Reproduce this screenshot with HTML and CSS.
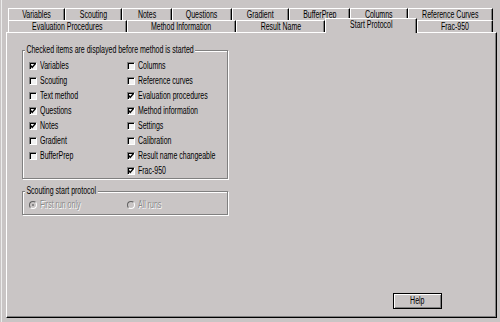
FILE: index.html
```html
<!DOCTYPE html>
<html>
<head>
<meta charset="utf-8">
<link rel="stylesheet" href="styles.css">
</head>
<body>
<div class="win">
  <div class="tabs">
    <div class="tabrow row1">
      <div class="tab"><span class="t">Variables</span></div>
      <div class="tab"><span class="t">Scouting</span></div>
      <div class="tab"><span class="t">Notes</span></div>
      <div class="tab"><span class="t">Questions</span></div>
      <div class="tab"><span class="t">Gradient</span></div>
      <div class="tab"><span class="t">BufferPrep</span></div>
      <div class="tab"><span class="t">Columns</span></div>
      <div class="tab"><span class="t">Reference Curves</span></div>
    </div>
    <div class="tabrow row2">
      <div class="tab"><span class="t">Evaluation Procedures</span></div>
      <div class="tab"><span class="t">Method Information</span></div>
      <div class="tab"><span class="t">Result Name</span></div>
      <div class="tab sel"><span class="t">Start Protocol</span></div>
      <div class="tab"><span class="t">Frac-950</span></div>
    </div>
  </div>
  <div class="panel">
    <div class="group g1">
      <span class="legend t">Checked items are displayed before method is started</span>
      <div class="cols">
        <div class="col">
          <div class="item"><span class="cb"><svg viewBox="0 0 6 6"><polyline points="0.6,2.4 2.2,4.4 5.6,0.4"/></svg></span><span class="t">Variables</span></div>
          <div class="item"><span class="cb"></span><span class="t">Scouting</span></div>
          <div class="item"><span class="cb"></span><span class="t">Text method</span></div>
          <div class="item"><span class="cb"><svg viewBox="0 0 6 6"><polyline points="0.6,2.4 2.2,4.4 5.6,0.4"/></svg></span><span class="t">Questions</span></div>
          <div class="item"><span class="cb"><svg viewBox="0 0 6 6"><polyline points="0.6,2.4 2.2,4.4 5.6,0.4"/></svg></span><span class="t">Notes</span></div>
          <div class="item"><span class="cb"></span><span class="t">Gradient</span></div>
          <div class="item"><span class="cb"></span><span class="t">BufferPrep</span></div>
        </div>
        <div class="col">
          <div class="item"><span class="cb"></span><span class="t">Columns</span></div>
          <div class="item"><span class="cb"></span><span class="t">Reference curves</span></div>
          <div class="item"><span class="cb"><svg viewBox="0 0 6 6"><polyline points="0.6,2.4 2.2,4.4 5.6,0.4"/></svg></span><span class="t">Evaluation procedures</span></div>
          <div class="item"><span class="cb"><svg viewBox="0 0 6 6"><polyline points="0.6,2.4 2.2,4.4 5.6,0.4"/></svg></span><span class="t">Method information</span></div>
          <div class="item"><span class="cb"></span><span class="t">Settings</span></div>
          <div class="item"><span class="cb"></span><span class="t">Calibration</span></div>
          <div class="item"><span class="cb"><svg viewBox="0 0 6 6"><polyline points="0.6,2.4 2.2,4.4 5.6,0.4"/></svg></span><span class="t">Result name changeable</span></div>
          <div class="item"><span class="cb"><svg viewBox="0 0 6 6"><polyline points="0.6,2.4 2.2,4.4 5.6,0.4"/></svg></span><span class="t">Frac-950</span></div>
        </div>
      </div>
    </div>
    <div class="group g2">
      <span class="legend t">Scouting start protocol</span>
      <div class="cols">
        <div class="col">
          <div class="item dis"><span class="rb on"></span><span class="t">First run only</span></div>
        </div>
        <div class="col">
          <div class="item dis"><span class="rb"></span><span class="t">All runs</span></div>
        </div>
      </div>
    </div>
    <div class="foot">
      <button class="btn"><span class="t">Help</span></button>
    </div>
  </div>
</div>
</body>
</html>
```
FILE: styles.css
```css
html, body {
  margin: 0;
  padding: 0;
}
body {
  width: 500px;
  height: 322px;
  overflow: hidden;
  background: #c9c5c5;
  font-family: "Liberation Sans", Arial, sans-serif;
  font-size: 10px;
  color: #000;
}
.win {
  height: 322px;
  box-sizing: border-box;
  margin-left: 1px;
  border-left: 1px solid #ececec;
  padding: 8px 3px 4px 4px;
}
.t {
  display: inline-block;
  white-space: nowrap;
  line-height: 10px;
  transform: scaleX(0.7);
  transform-origin: 0 50%;
}
.tabs {
  margin: 0 4px 0 2px;
}
.tabrow {
  display: grid;
  height: 12px;
}
.row1 {
  grid-template-columns: 57px 57px 50px 60px 57px 61px 58px 1fr;
}
.row2 {
  grid-template-columns: 119px 109px 89px 92px 1fr;
}
.tab {
  display: flex;
  align-items: center;
  justify-content: center;
  box-sizing: border-box;
  border-top: 1px solid #fff;
  border-left: 1px solid #fff;
  border-right: 1px solid #000;
  box-shadow: inset -1px 0 #808080;
  background: #c9c5c5;
}
.tab .t {
  transform-origin: 50% 50%;
}
.tab.sel {
  margin-top: -2px;
  margin-bottom: -1px;
  padding-bottom: 3px;
  position: relative;
  z-index: 2;
}
.panel {
  height: 286px;
  box-sizing: border-box;
  border: 1px solid;
  border-color: #fff #000 #000 #fff;
  box-shadow: inset -1px -1px #808080;
  display: flex;
  flex-direction: column;
  padding: 17px 0 8px 15px;
}
.group {
  position: relative;
  width: 206px;
  box-sizing: border-box;
  border: 1px solid #808080;
  box-shadow: inset 1px 1px #fff, 1px 1px #fff;
}
.g1 {
  height: 129px;
  padding: 7px 0 0 6px;
}
.g2 {
  margin-top: 12px;
  height: 24px;
  padding: 5px 0 0 6px;
}
.legend {
  position: absolute;
  top: -7px;
  left: 2px;
  padding: 0 2px;
  line-height: 12px;
  background: #c9c5c5;
}
.cols {
  display: flex;
}
.col {
  width: 98px;
}
.item {
  height: 15px;
  display: flex;
  align-items: center;
  gap: 3px;
}
.cb {
  width: 8px;
  height: 8px;
  box-sizing: border-box;
  border: 1px solid;
  border-color: #808080 #fff #fff #808080;
  box-shadow: inset 1px 1px #000;
  background: #f2f2f2;
  display: flex;
  flex: none;
}
.cb svg {
  width: 6px;
  height: 6px;
  fill: none;
  stroke: #000;
  stroke-width: 1.4;
}
.rb {
  width: 8px;
  height: 8px;
  box-sizing: border-box;
  border-radius: 50%;
  border: 1px solid;
  border-color: #606060 #fff #fff #606060;
  background: #c9c5c5;
  display: flex;
  align-items: center;
  justify-content: center;
  flex: none;
}
.rb.on::after {
  content: "";
  width: 2px;
  height: 2px;
  border-radius: 50%;
  background: #707070;
}
.dis .t {
  color: #8a8a8a;
  text-shadow: 1px 1px #fff;
}
.foot {
  margin-top: auto;
  display: flex;
  justify-content: flex-end;
  padding-right: 54px;
}
.btn {
  width: 49px;
  height: 16px;
  box-sizing: border-box;
  border: 1px solid #000;
  background: #c9c5c5;
  box-shadow: inset 1px 1px #fff, inset -1px -1px #808080;
  padding: 0;
  margin: 0;
  font: inherit;
  color: #000;
  display: flex;
  align-items: center;
  justify-content: center;
}
.btn .t {
  transform-origin: 50% 50%;
}
```
